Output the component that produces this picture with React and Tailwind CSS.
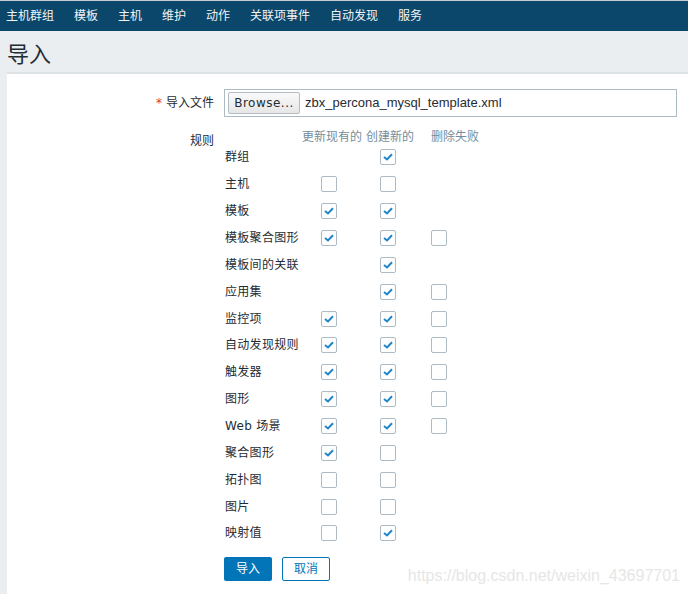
import React from 'react';

const NAV = ['主机群组', '模板', '主机', '维护', '动作', '关联项事件', '自动发现', '服务'];

// [label, col1, col2, col3] : true = checked, false = empty, null = none
const RULES = [
    ['群组', null, true, null],
    ['主机', false, false, null],
    ['模板', true, true, null],
    ['模板聚合图形', true, true, false],
    ['模板间的关联', null, true, null],
    ['应用集', null, true, false],
    ['监控项', true, true, false],
    ['自动发现规则', true, true, false],
    ['触发器', true, true, false],
    ['图形', true, true, false],
    ['Web 场景', true, true, false],
    ['聚合图形', true, false, null],
    ['拓扑图', false, false, null],
    ['图片', false, false, null],
    ['映射值', false, true, null],
];

const Box = ({ checked }) => (
    <div className="w-4 h-4 rounded-[2px] border border-[#acbbc4] bg-white flex items-center justify-center">
        {checked && (
            <svg width="10" height="8" viewBox="0 0 10 8">
                <path d="M1 4 L4 6.5 L9 1.2" fill="none" stroke="#1f85c9" strokeWidth="2" />
            </svg>
        )}
    </div>
);

const Cell = ({ value, className }) => (
    <div className={className}>{value === null ? null : <Box checked={value} />}</div>
);

const App = () => {
    return (
        <div
            className="w-[688px] h-[594px] overflow-hidden bg-[#ebeef0] text-[#1f2c33] relative"
            style={{ fontFamily: '"DejaVu Sans", "Noto Sans CJK SC", sans-serif' }}
        >
            <div className="h-px bg-[#c5ccd1]"></div>
            <nav className="h-[30px] bg-[#0b476b] flex items-center text-[12px] text-[#f1f4f6]">
                {NAV.map((item) => (
                    <span key={item} className="px-[10px] first:pl-[6px]">
                        {item}
                    </span>
                ))}
            </nav>

            <h1 className="pl-[7px] pt-[9px] h-[41px] text-[22px] leading-[30px] text-[#1f2c33]">导入</h1>

            <div className="ml-[7px] h-[522px] bg-white border-t-2 border-[#dde2e5]">
                {/* file row */}
                <div className="flex items-center mt-[15px]">
                    <div className="w-[207px] text-right text-[12px]">
                        <span className="text-[#e33734] mr-[4px]">*</span>
                        导入文件
                    </div>
                    <div className="ml-[10px] w-[453px] h-[28px] border border-[#acbbc4] flex items-center pl-[3px]">
                        <button className="h-[22px] w-[72px] rounded-[2px] border border-[#b3bcc3] bg-gradient-to-b from-[#fafafa] to-[#e6e6e6] text-[12px] text-[#1f2c33] tracking-[0.5px]">
                            Browse...
                        </button>
                        <span
                            className="ml-[5px] text-[13px] text-[#1f2c33]"
                            style={{ fontFamily: '"Liberation Sans", Arial, sans-serif' }}
                        >
                            zbx_percona_mysql_template.xml
                        </span>
                    </div>
                </div>

                {/* rules */}
                <div className="flex mt-[13px]">
                    <div className="w-[207px] text-right text-[12px] pt-[2px]">规则</div>
                    <div className="ml-[11px]">
                        <div className="flex text-[12px] text-[#768d99] h-[14px] items-center">
                            <span className="w-[77px]"></span>
                            <span className="w-[64px]">更新现有的</span>
                            <span className="w-[65px]">创建新的</span>
                            <span>删除失败</span>
                        </div>
                        {RULES.map(([label, a, b, c]) => (
                            <div key={label} className="flex items-center h-[26.86px] text-[12px]">
                                <span className="w-[77px] tracking-[0.3px]">{label}</span>
                                <Cell value={a} className="w-[64px] pl-[19px]" />
                                <Cell value={b} className="w-[65px] pl-[14px]" />
                                <Cell value={c} className="w-[40px] pl-0" />
                            </div>
                        ))}
                        <div className="flex gap-[10px] mt-[10px] -ml-px">
                            <button className="w-[48px] h-[24px] rounded-[2px] bg-[#0275b8] text-white text-[12px]">
                                导入
                            </button>
                            <button className="w-[48px] h-[24px] rounded-[2px] border border-[#0275b8] bg-white text-[#0275b8] text-[12px]">
                                取消
                            </button>
                        </div>
                    </div>
                </div>
            </div>

            <span
                className="absolute right-[8px] bottom-[6px] text-[16px] text-[#e6e6e6]"
                style={{ fontFamily: '"Liberation Sans", Arial, sans-serif' }}
            >
                https://blog.csdn.net/weixin_43697701
            </span>
        </div>
    );
};

export default App;
